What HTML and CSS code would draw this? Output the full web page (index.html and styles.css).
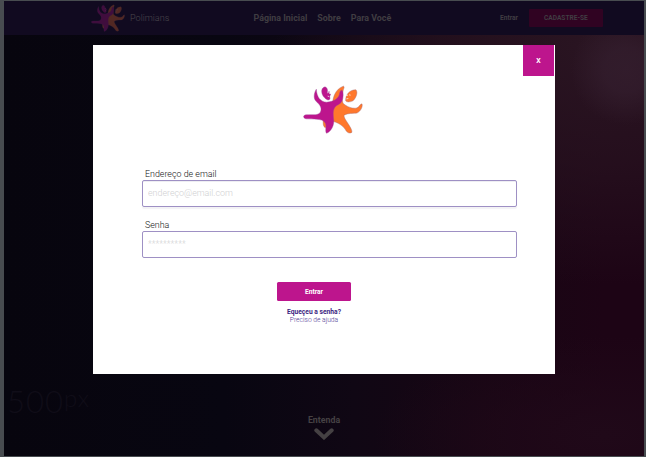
FILE: index.html
```html
<!DOCTYPE html>
<html lang="pt-BR">
<head>
<meta charset="utf-8">
<title>Polimians</title>
<link rel="stylesheet" href="styles.css">
</head>
<body>
<svg class="defs" width="0" height="0" aria-hidden="true">
  <symbol id="logo" viewBox="38 30 180 146">
    <g class="logo-orange">
      <path d="M127 90C126 66 136 41 159 33C164 34 160 40 158 48C152 65 157 79 158 84C168 94 184 100 197 99C207 98 208 86 215 86C219 97 206 114 197 114C182 114 166 116 161 121C160 132 185 156 185 171C178 177 169 172 165 163C158 151 143 143 130 139L105 158C98 154 99 146 98 136L125 132Z"/>
      <path d="M166 77C165 59 178 43 197 44C204 53 196 70 188 77C180 81 168 82 166 77Z"/>
    </g>
    <g class="logo-pink">
      <path d="M78 42C79 66 91 80 109 81C131 80 147 69 148 53C152 41 157 44 158 53C160 72 154 83 145 88C129 95 127 107 130 133C133 151 119 173 108 174C103 165 111 151 103 141C96 130 66 132 47 131C37 128 38 120 47 119C69 117 84 122 90 111C97 95 85 87 76 77C67 65 74 48 78 42Z"/>
      <path d="M104 35C89 38 93 60 103 68C110 77 119 75 119 70L118 64L121 57L116 56L117 49L111 52C113 43 110 37 104 35Z"/>
    </g>
    <path class="logo-face" d="M111 53L115 52M112 63L116 64M166 61L173 60M176 59L181 60M168 71L174 70"/>
  </symbol>
</svg>
<div class="page">
  <header class="nav">
    <div class="brand"><svg class="brand-logo"><use href="#logo"/></svg><span>Polimians</span></div>
    <nav class="links"><a>Página Inicial</a><a>Sobre</a><a>Para Você</a></nav>
    <div class="account"><a>Entrar</a><span class="signup">CADASTRE-SE</span></div>
  </header>
  <main class="hero">
    <div class="watermark">500<span>px</span></div>
    <div class="more"><span>Entenda</span>
      <svg class="chevron" viewBox="0 0 20 12"><path d="M2.3 2.3L10 9.4L17.7 2.3"/></svg>
    </div>
  </main>
</div>
<section class="modal">
  <button class="close">X</button>
  <svg class="modal-logo"><use href="#logo"/></svg>
  <form class="form">
    <label for="email">Endereço de email</label>
    <input class="email" id="email" type="text" placeholder="endereço@email.com">
    <label for="senha">Senha</label>
    <input id="senha" type="text" placeholder="**********">
  </form>
  <div class="actions">
    <button class="submit">Entrar</button>
    <a class="forgot">Equeçeu a senha?</a>
    <a class="help">Preciso de ajuda</a>
  </div>
</section>
</body>
</html>
```
FILE: styles.css
```css
* { box-sizing: border-box; }
body { margin: 0; height: 457px; overflow: hidden; background: #484c50; font-family: Roboto, "Liberation Sans", sans-serif; }
.defs { position: absolute; }
.logo-orange { fill: #ff782d; stroke: #a06a78; stroke-width: 1.2; }
.logo-pink { fill: #bd158d; stroke: #9a4a98; stroke-width: 1.2; }
.logo-face { fill: none; stroke: #fff; stroke-width: 2; }
.page { display: flex; flex-direction: column; height: 457px; padding: 1px 2px 1px 4px; }
.nav { display: grid; grid-template-columns: 249.5px 246.5px 1fr; align-items: center; height: 34px; background: #110a20; color: #403d42; }
.brand { display: flex; align-items: center; padding-left: 87px; gap: 5px; font-size: 9.1px; font-weight: 300; }
.brand span { color: #4a474c; }
.brand-logo { width: 34px; height: 28px; opacity: .27; }
.brand-logo .logo-face { stroke: none; }
.links { display: flex; gap: 10px; font-size: 8.9px; font-weight: 700; }
.account { display: flex; align-items: center; gap: 11px; font-size: 6.6px; font-weight: 700; }
.signup { width: 74px; height: 18px; line-height: 18px; text-align: center; background: #300322; border-radius: 1px; }
.hero {
  flex: 1; display: flex; flex-direction: column; align-items: center;
  background:
    radial-gradient(circle at 622px 35px, rgba(52,30,46,.8) 0, rgba(52,30,46,.7) 22px, transparent 55px),
    radial-gradient(ellipse 330px 240px at 600px 10px, #2a1522, rgba(42,21,34,.6) 50%, transparent),
    radial-gradient(ellipse 230px 100px at 600px 400px, #200919, transparent),
    linear-gradient(90deg, #07050e 0, #080611 220px, #100714 350px, #180614 480px, #1d0415 600px);
}
.watermark { align-self: flex-start; margin: 342px 0 0 3px; height: 40px; font: 300 31px/48px Lato, sans-serif; letter-spacing: 1px; color: #100d18; }
.watermark span { font-size: 24px; position: relative; top: -6px; }
.more { display: flex; flex-direction: column; align-items: center; margin-top: -2px; color: #454143; font-size: 8.8px; line-height: 11px; font-weight: 700; }
.chevron { width: 20px; height: 12px; margin-top: 2px; fill: none; stroke: #454143; stroke-width: 4; stroke-linecap: round; }
.modal { position: absolute; left: 93px; top: 45px; width: 462px; height: 329px; display: flex; flex-direction: column; background: #fff; }
button { border: 0; padding: 0; font-family: inherit; font-weight: 700; color: #fff; background: #bd158d; }
.close { align-self: flex-end; width: 31px; height: 31px; margin-right: 1px; font-size: 7px; }
.modal-logo { width: 60px; height: 49px; margin: 9px 0 0 210px; }
.form { display: flex; flex-direction: column; width: 375px; margin: 34px 0 0 49px; }
.form label { height: 12px; padding-left: 3px; font-size: 8.9px; line-height: 12px; font-weight: 300; color: #111; }
.form input { height: 27px; margin: 0 0 12px; padding: 0 5px 2px; border: 1px solid #9e90c4; border-radius: 2px; outline: 0; background: #fff; font: 300 8.9px Roboto, sans-serif; }
.form .email { box-shadow: 0 2px 1px #f3f2f5, inset 0 1px #eeeef2; }
.form input::placeholder { color: #d0d0d2; opacity: 1; }
.actions { display: flex; flex-direction: column; align-items: center; width: 74px; margin: 12px 0 0 184px; font-size: 6.7px; line-height: 8px; white-space: nowrap; }
.submit { width: 74px; height: 19px; border-radius: 1.5px; margin-bottom: 7px; font-size: 6.6px; }
.forgot { font-weight: 700; color: #3b247f; }
.help { font-weight: 300; color: #4d3792; }
```
